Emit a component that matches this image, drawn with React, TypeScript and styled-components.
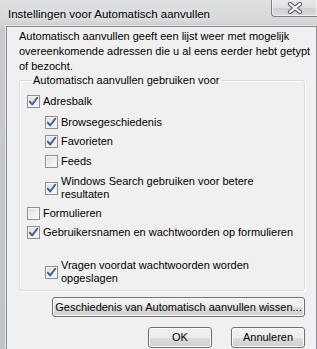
import React from 'react';
import styled, { createGlobalStyle } from 'styled-components';

interface Option {
  label: React.ReactNode;
  checked: boolean;
  level: number;
  gap: number;
  lines?: number;
}

const options: Option[] = [
  { label: 'Adresbalk', checked: true, level: 1, gap: 8 },
  { label: 'Browsegeschiedenis', checked: true, level: 2, gap: 8 },
  { label: 'Favorieten', checked: true, level: 2, gap: 6 },
  { label: 'Feeds', checked: false, level: 2, gap: 7 },
  { label: 'Windows Search gebruiken voor betere resultaten', checked: true, level: 2, gap: 7, lines: 2 },
  { label: 'Formulieren', checked: false, level: 1, gap: 6 },
  { label: 'Gebruikersnamen en wachtwoorden op formulieren', checked: true, level: 1, gap: 6 },
  { label: 'Vragen voordat wachtwoorden worden opgeslagen', checked: true, level: 2, gap: 20, lines: 2 },
];

const CheckBox: React.FC<{ checked: boolean }> = ({ checked }) => (
  <Box>
    {checked && (
      <svg width="11" height="11" viewBox="0 0 11 11">
        <path d="M1.8 5.6 L4.2 8.4 L9.2 1.8" fill="none" stroke="#3a5690" strokeWidth="1.9" strokeLinecap="round" strokeLinejoin="round" />
        <path d="M2.4 5.4 L4.2 7.4 L8.6 1.9" fill="none" stroke="#6f8ac0" strokeWidth="0.6" />
      </svg>
    )}
  </Box>
);

const App: React.FC = () => {
  return (
    <>
      <GlobalStyle />
      <Window>
        <TitleBar>
          <Title>Instellingen voor Automatisch aanvullen</Title>
          <CloseButton>
            <svg width="16" height="12" viewBox="0 0 16 12">
              <path d="M3 2 L13 10 M13 2 L3 10" stroke="#5d6066" strokeWidth="4.2" strokeLinecap="round" />
              <path d="M3 2 L13 10 M13 2 L3 10" stroke="#ffffff" strokeWidth="2.2" strokeLinecap="round" />
            </svg>
          </CloseButton>
        </TitleBar>
        <Client>
          <Description>
            Automatisch aanvullen geeft een lijst weer met mogelijk
            <br />
            overeenkomende adressen die u al eens eerder hebt getypt
            <br />
            of bezocht.
          </Description>
          <Group>
            <Legend>Automatisch aanvullen gebruiken voor</Legend>
            {options.map((o, i) => (
              <Row key={i} $level={o.level} $gap={o.gap}>
                <CheckBox checked={o.checked} />
                <Label $multi={!!o.lines}>{o.label}</Label>
              </Row>
            ))}
          </Group>
          <ClearRow>
            <PushButton $width={253} $height={20}>
              Geschiedenis van Automatisch aanvullen wissen...
            </PushButton>
          </ClearRow>
          <DialogButtons>
            <PushButton $width={64} $height={21}>OK</PushButton>
            <PushButton $width={74} $height={21}>Annuleren</PushButton>
          </DialogButtons>
        </Client>
      </Window>
    </>
  );
};

export default App;

const GlobalStyle = createGlobalStyle`
  html, body {
    margin: 0;
    padding: 0;
  }
  body {
    font-family: "Liberation Sans", Arial, sans-serif;
    font-size: 11px;
    color: #000;
    background: #cdd0d3;
  }
`;

const Window = styled.div`
  width: 317px;
  height: 349px;
  display: flex;
  flex-direction: column;
  overflow: hidden;
  background: linear-gradient(to bottom, #dfe0e1 0px, #d6d8da 20px, #c9cbce 30px, #c2c5c8 100%);
`;

const TitleBar = styled.div`
  height: 26px;
  display: flex;
  align-items: flex-start;
  flex-shrink: 0;
`;

const Title = styled.div`
  padding: 7px 0 0 8px;
  font-size: 11.5px;
  line-height: 14px;
  color: #000;
  text-shadow: 0 0 6px rgba(255, 255, 255, 0.9);
`;

const CloseButton = styled.div`
  margin-left: auto;
  margin-top: -1px;
  width: 46px;
  height: 18px;
  box-sizing: border-box;
  border: 1px solid #7c7f84;
  border-top: none;
  border-right: none;
  border-radius: 0 0 0 4px;
  background: linear-gradient(to bottom, #e9eaec 0%, #dcdee1 50%, #cdd0d4 51%, #d9dbde 100%);
  box-shadow: inset 0 0 0 1px rgba(255, 255, 255, 0.6);
  display: flex;
  align-items: center;
  justify-content: center;
  padding-top: 1px;
`;

const Client = styled.div`
  flex: 1;
  margin-left: 6px;
  border: 1px solid #8a8d91;
  border-bottom: none;
  background: #f0f0f0;
  padding: 2px 11px 0 12px;
  display: flex;
  flex-direction: column;
  box-shadow: -1px -1px 0 #e4e6e8;
`;

const Description = styled.div`
  line-height: 15px;
  white-space: nowrap;
`;

const Group = styled.fieldset`
  margin: 0;
  padding: 0 0 5px 7px;
  border: 1px solid #d5dfe5;
  border-radius: 3px;
  box-shadow: inset 1px 1px 0 #ffffff, 1px 1px 0 #ffffff;
  min-width: 0;
`;

const Legend = styled.legend`
  margin-left: 5px;
  padding: 0 1px;
  line-height: 13px;
`;

const Row = styled.div<{ $level: number; $gap: number }>`
  display: flex;
  align-items: center;
  margin-top: ${p => p.$gap}px;
  margin-left: ${p => (p.$level - 1) * 18}px;
`;

const Box = styled.div`
  width: 13px;
  height: 13px;
  box-sizing: border-box;
  flex-shrink: 0;
  border: 1px solid #8e8f8f;
  background: linear-gradient(135deg, #dcdee2 0%, #eef0f2 60%, #fbfbfb 100%);
  box-shadow: inset 0 0 0 1px #f4f4f4;
  display: flex;
  align-items: center;
  justify-content: center;
`;

const Label = styled.span<{ $multi: boolean }>`
  margin-left: 3px;
  line-height: 13px;
  max-width: ${p => (p.$multi ? '215px' : 'none')};
`;

const ClearRow = styled.div`
  display: flex;
  justify-content: flex-end;
  margin-top: 6px;
`;

const DialogButtons = styled.div`
  display: flex;
  justify-content: flex-end;
  gap: 19px;
  margin-top: 10px;
`;

const PushButton = styled.button<{ $width: number; $height: number }>`
  width: ${p => p.$width}px;
  height: ${p => p.$height}px;
  box-sizing: border-box;
  padding: 0;
  border: 1px solid #707070;
  border-radius: 3px;
  background: linear-gradient(to bottom, #f2f2f2 0%, #ebebeb 50%, #dddddd 51%, #cfcfcf 100%);
  box-shadow: inset 0 0 0 1px #fbfbfb;
  font-family: "Liberation Sans", Arial, sans-serif;
  font-size: 11px;
  color: #000;
  line-height: 1;
`;
